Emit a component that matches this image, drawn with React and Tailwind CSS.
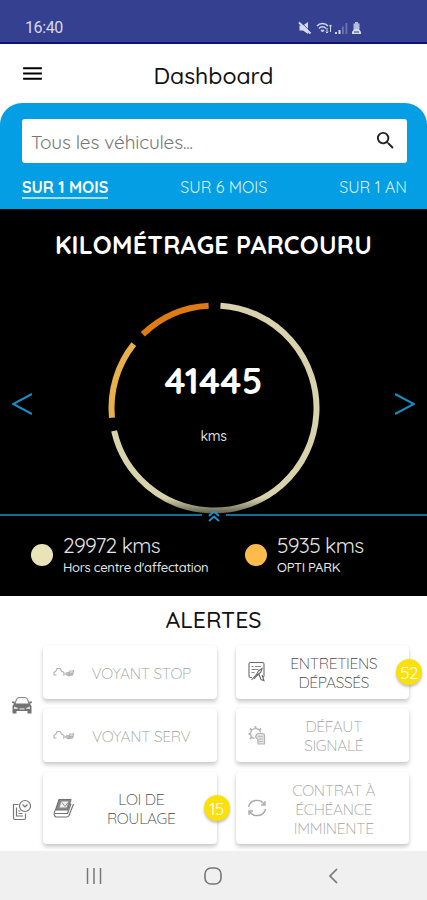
import React, { useState } from "react";
import { MdMenu, MdSearch } from "react-icons/md";

const periods = ["SUR 1 MOIS", "SUR 6 MOIS", "SUR 1 AN"];

// start and end are clockwise degrees from the top of the ring
const arcs = [
  { start: 3.6, end: 257, color: "#d8d3ac" },
  { start: 264.5, end: 308.5, color: "#e7b04a" },
  { start: 316, end: 357, color: "#e07a12" },
];

const legend = [
  { value: "29972 kms", label: "Hors centre d'affectation", dot: "bg-[#e9e4b8]" },
  { value: "5935 kms", label: "OPTI PARK", dot: "bg-[#fdbb4b]" },
];

function StatusIcons() {
  return (
    <div className="flex items-center text-[#d5d9ee]">
      <svg width="14" height="14" viewBox="0 0 14 14" fill="currentColor">
        <path d="M1.5 4.5H5L10 1v12L5 9.500H1.500z" />
        <path d="m1 1.500 11.500 11" stroke="currentColor" strokeWidth="2" />
        <path d="m2.500 .8 10.500 10" stroke="#354090" strokeWidth=".8" />
      </svg>
      <svg width="17" height="14" viewBox="0 0 17 14" fill="none" stroke="currentColor" className="ml-1">
        <path d="M1 5C4 1.5 9 1.5 12 5M3 7.5C5 5.2 8 5.2 10 7.5" strokeWidth="1.5" />
        <path d="M5 9.2h3L6.5 11z" fill="currentColor" />
        <path d="M11 7v5M9.7 10.7 11 12l1.3-1.3M14.5 11V4M13.2 5.3 14.5 4l1.3 1.3" strokeWidth="1" />
      </svg>
      <svg width="13" height="14" viewBox="0 0 13 14" fill="currentColor" className="ml-0.5">
        <path d="M0 11h2v2H0zM3.5 9h2v4h-2z" />
        <path d="M7 5.5h1.8V13H7zM10.5 2h1.8v11h-1.8z" opacity=".35" />
      </svg>
      <svg width="11" height="14" viewBox="0 0 11 14" fill="currentColor" className="ml-[3px]">
        <path d="M4 1h3v1.5h1.5V8h-6V2.5H4z" opacity=".8" />
        <path d="M3 8h5l2 3v2H1v-2z" />
        <path d="M3 11h5" stroke="#354090" strokeWidth="1" />
      </svg>
    </div>
  );
}

function EngineIcon() {
  return (
    <svg width="22" height="12" viewBox="0 0 22 12" fill="none" stroke="#b0b0b0" strokeWidth="1.1">
      <path d="M3.5 9H1V6.500L3 5l1-2.500h3L8.500 5l2.500 1.500V9H10" />
      <path d="M12 8.5l2-2 2 .5 1-2h3M13 8.500l3 1.500 4-2 .5-4" />
      <path d="M15 7h4.500v2H15z" fill="#bbb" />
    </svg>
  );
}

function ServiceIcon() {
  return (
    <svg width="20" height="22" viewBox="0 0 20 22" fill="none" stroke="#6b6b6b" strokeWidth="1.1">
      <path d="M5 16.5H3.5A1.5 1.5 0 0 1 2 15V3a1.500 1.500 0 0 1 1.500-1.500h12A1.500 1.500 0 0 1 17 3v12a1.500 1.500 0 0 1-1 1.300" />
      <path d="M4.500 5.500h2M8 5.500h6M4.500 8.500h7M4.500 11.500h3" strokeWidth=".8" />
      <path d="m4.500 19 5-5.500 2-3.500 3.500-2.500-1 3.500-3 2.500-4 4.500" />
      <path d="m9.500 14 2.500-.5 2 5 3 1-2-5.500" />
    </svg>
  );
}

function FaultIcon() {
  return (
    <svg width="20" height="22" viewBox="0 0 20 22" fill="none" stroke="#b5b5b5" strokeWidth="1.2">
      <path d="M7.5 14.5a5 5 0 1 1 6-6" />
      <path d="M8.5 4V2M4.5 6 3 4.5M12.5 6 14 4.5M3.5 10h-2M4.5 13.5 3 15" strokeWidth="1.8" />
      <path d="M9 11.5a3 3 0 0 1 3-2h3.5a2 2 0 0 1 2 2V20H11v-4.5L8.5 13z" fill="#e2e2e2" />
      <path d="M11 12.5h5M12 15h4M12 17.5h4" strokeWidth=".8" />
    </svg>
  );
}

function BookIcon() {
  return (
    <svg width="22" height="21" viewBox="0 0 22 21" fill="none" stroke="#707070" strokeWidth="1.1" strokeLinejoin="round">
      <path d="M6 1.500h12l-3.500 10.500h-12z" fill="#888" />
      <path d="M8.500 3.500h7l-2 6h-7z" fill="#eee" stroke="none" />
      <path d="m9 4.5 3 4 3-4" strokeWidth=".7" />
      <path d="M2.500 12.500c-1.200.5-1.800 3-1 5 .3 1 1 1.500 2 1.500H14c1 0 1.500-.5 2-1.500L20.500 6" />
      <path d="M2 15.500h12.500l3.500-10" strokeWidth="1.2" />
    </svg>
  );
}

function RenewIcon() {
  return (
    <svg width="20" height="18" viewBox="0 0 20 18" fill="none" stroke="#aaa" strokeWidth="1.4">
      <path d="M1.5 8C3 .5 13-1 17.5 5.5M18.5 10C17 17.5 7 19 2.5 12.5" />
      <path d="M18 2v4h-4M2 16v-4h4" />
    </svg>
  );
}

function CarIcon() {
  return (
    <svg width="22" height="19" viewBox="0 0 22 19">
      <path d="M4 8C5 3.5 6 1.5 8 1.5h6c2 0 3 2 4 6.5" fill="none" stroke="#888" strokeWidth="1.2" />
      <path d="M1 5.5h2.5L4 7.5h14l.5-2H21v1.3l-2 1 1.5 2.2v7.5h-4V15h-11v2.5h-4V10L3 7.8l-2-1z" fill="#737373" />
      <path d="M3 10.5l4 1.5-.5 1H3zM19 10.5 15 12l.5 1H19zM8.5 12.3h5v1.2h-5z" fill="#ddd" />
    </svg>
  );
}

function ContractIcon() {
  return (
    <svg width="20" height="23" viewBox="0 0 20 23" fill="none" stroke="#777" strokeWidth="1.2">
      <circle cx="13" cy="7" r="5.5" />
      <path d="m10.5 5.5 2.5 2.5 2.5-2.5" />
      <path d="M6.500 5.500H1.500v13.500a1.500 1.500 0 0 0 1.500 1.500h9a1.500 1.500 0 0 0 1.500-1.500v-4.500M4.500 8.500V17H11M6.500 12h2M6.500 14.500h4" />
    </svg>
  );
}

function Badge({ children }) {
  return (
    <span className="absolute -right-[13px] top-1/2 flex h-[26px] w-[26px] -translate-y-1/2 items-center justify-center rounded-full bg-[#fbe009] pt-px text-[17px] font-normal tracking-[-0.5px] text-white shadow-[0_2px_3px_rgba(0,0,0,0.25)]">
      {children}
    </span>
  );
}

function AlertCard({ icon, lines, active, badge }) {
  return (
    <div className="relative flex flex-1 items-center rounded-[4px] bg-white pl-[10px] pr-[9px] shadow-[0_3px_4px_rgba(0,0,0,0.2),0_0_2px_rgba(0,0,0,0.06)]">
      <div className="flex w-[22px] shrink-0 justify-center">{icon}</div>
      <div
        className={`flex-1 whitespace-nowrap pt-0.5 text-center text-[15.5px] font-light leading-[19px] tracking-[-0.3px] ${
          active ? "text-[#444]" : "text-[#a0a0a0]"
        }`}
      >
        {lines.map((line) => (
          <p key={line}>{line}</p>
        ))}
      </div>
      {badge && <Badge>{badge}</Badge>}
    </div>
  );
}

function Ring() {
  return (
    <svg width="214" height="214" viewBox="-107 -107 214 214" className="col-start-1 row-start-1">
      <defs>
        <linearGradient id="fade" x1="0" y1="0" x2="0" y2="1">
          <stop offset="0" stopColor="#000" stopOpacity="0" />
          <stop offset="1" stopColor="#000" stopOpacity="0.6" />
        </linearGradient>
      </defs>
      {arcs.map((arc) => (
        <circle
          key={arc.color}
          r="102.5"
          fill="none"
          stroke={arc.color}
          strokeWidth="6"
          pathLength="360"
          strokeDasharray={`${arc.end - arc.start} 360`}
          transform={`rotate(${arc.start - 90})`}
        />
      ))}
      <rect x="-60" y="90" width="120" height="17" fill="url(#fade)" />
    </svg>
  );
}

function App() {
  const [period, setPeriod] = useState(periods[0]);

  return (
    <div className="flex h-[900px] w-[427px] flex-col overflow-hidden bg-white font-['Quicksand','Lato',sans-serif]">
      <div className="flex h-11 shrink-0 items-center justify-between border-b-2 border-[#10107c] bg-[#354090] pl-[25px] pr-[65px] pt-[13px]">
        <span className="font-['Roboto',sans-serif] text-[16px] leading-none tracking-[-0.4px] text-[#d5d9ee]">
          16:40
        </span>
        <StatusIcons />
      </div>

      <header className="grid h-[59px] shrink-0 grid-cols-[64px_1fr_64px] items-center">
        <button className="pl-5">
          <MdMenu className="h-[25px] w-[25px] text-black" />
        </button>
        <h1 className="pt-1.5 text-center text-[23px] font-medium text-[#111]">
          Dashboard
        </h1>
      </header>

      <div className="h-[106px] shrink-0 rounded-t-[22px] bg-[#039ee3] pl-[22px] pr-5 pt-4">
        <div className="flex h-11 items-center justify-between rounded-[3px] bg-white pl-[9px] pr-[10px]">
          <span className="pt-0.5 text-[19px] tracking-[-0.15px] text-[#777]">
            Tous les véhicules...
          </span>
          <MdSearch className="mb-0.5 h-[23px] w-[23px] text-[#222]" />
        </div>
        <div className="mt-3 flex items-start justify-between">
          {periods.map((item) => (
            <button
              key={item}
              onClick={() => setPeriod(item)}
              className={`h-6 whitespace-nowrap text-[16px] leading-6 ${
                item === period
                  ? "border-b-2 border-[#a9dcf5] font-bold text-white"
                  : "text-[#d8effb]"
              }`}
            >
              {item}
            </button>
          ))}
        </div>
      </div>

      <section className="flex h-[387px] shrink-0 flex-col bg-black text-white">
        <h2 className="mt-5 text-center text-[25px] font-bold leading-8 tracking-[0.25px]">
          KILOMÉTRAGE PARCOURU
        </h2>
        <div className="mt-10 flex h-[214px] items-center justify-between px-3">
          <svg width="20" height="24" viewBox="0 0 20 24" fill="none" stroke="#168fc8" strokeWidth="2" className="mb-2">
            <path d="M20 2 1 12l19 10" />
          </svg>
          <div className="grid place-items-center">
            <Ring />
            <div className="col-start-1 row-start-1 flex flex-col items-center">
              <span className="text-[36px] font-bold leading-10 tracking-[0.2px]">41445</span>
              <span className="mb-2.5 mt-[25px] text-[14px] font-medium leading-5 tracking-[-0.3px] text-[#ddd]">kms</span>
            </div>
          </div>
          <svg width="20" height="24" viewBox="0 0 20 24" fill="none" stroke="#168fc8" strokeWidth="2" className="mb-2">
            <path d="m0 2 19 10L0 22" />
          </svg>
        </div>
        <div className="-mt-2 flex h-4 items-center">
          <div className="h-[2px] flex-1 bg-[#146b94]" />
          <svg width="24" height="14" viewBox="0 0 24 14" fill="none" stroke="#2090c5" strokeWidth="2">
            <path d="m7 8 5-4.5L17 8M7 13l5-4.5 5 4.5" />
          </svg>
          <div className="h-[2px] flex-1 bg-[#146b94]" />
        </div>
        <div className="mt-[10px] flex pl-[31px]">
          {legend.map((entry) => (
            <div key={entry.value} className="flex w-[214px] shrink-0 items-center">
              <span className={`mb-px h-[22px] w-[22px] shrink-0 rounded-full ${entry.dot}`} />
              <div className="ml-[10px] whitespace-nowrap text-[#e5e5e5]">
                <p className="text-[21px] leading-6 tracking-[-0.65px]">{entry.value}</p>
                <p className="pt-px text-[13px] font-medium leading-[19px] tracking-[-0.3px]">{entry.label}</p>
              </div>
            </div>
          ))}
        </div>
      </section>

      <section className="h-[255px] shrink-0">
        <h2 className="pt-2 text-center text-[23px] font-medium leading-8 text-[#111]">ALERTES</h2>
        <div className="mt-[9px] grid grid-cols-[43px_1fr] gap-y-[10px] pr-[18px]">
          <div className="flex items-center pl-[11px] pt-1">
            <CarIcon />
          </div>
          <div className="flex flex-col gap-[9px]">
            <div className="flex h-[54px] gap-[19px]">
              <AlertCard icon={<EngineIcon />} lines={["VOYANT STOP"]} />
              <AlertCard icon={<ServiceIcon />} lines={["ENTRETIENS", "DÉPASSÉS"]} active badge="52" />
            </div>
            <div className="flex h-[54px] gap-[19px]">
              <AlertCard icon={<EngineIcon />} lines={["VOYANT SERV"]} />
              <AlertCard icon={<FaultIcon />} lines={["DÉFAUT", "SIGNALÉ"]} />
            </div>
          </div>
          <div className="flex items-center pl-3 pt-[5px]">
            <ContractIcon />
          </div>
          <div className="flex h-[72px] gap-[19px]">
            <AlertCard icon={<BookIcon />} lines={["LOI DE", "ROULAGE"]} active badge="15" />
            <AlertCard icon={<RenewIcon />} lines={["CONTRAT À", "ÉCHÉANCE", "IMMINENTE"]} />
          </div>
        </div>
      </section>

      <nav className="flex h-[49px] shrink-0 items-center bg-[#f0f0f0] pl-[86px]">
        <svg width="16" height="16" viewBox="0 0 16 16" stroke="#777" strokeWidth="1.5">
          <path d="M1.5 0v16M8 0v16M14.5 0v16" />
        </svg>
        <svg width="18" height="18" viewBox="0 0 18 18" fill="none" stroke="#777" strokeWidth="1.6" className="ml-[102px]">
          <rect x="1" y="1" width="16" height="16" rx="6" />
        </svg>
        <svg width="10" height="16" viewBox="0 0 10 16" fill="none" stroke="#777" strokeWidth="1.7" className="ml-[106px]">
          <path d="M9 1 2 8l7 7" />
        </svg>
      </nav>
    </div>
  );
}

export default App;
